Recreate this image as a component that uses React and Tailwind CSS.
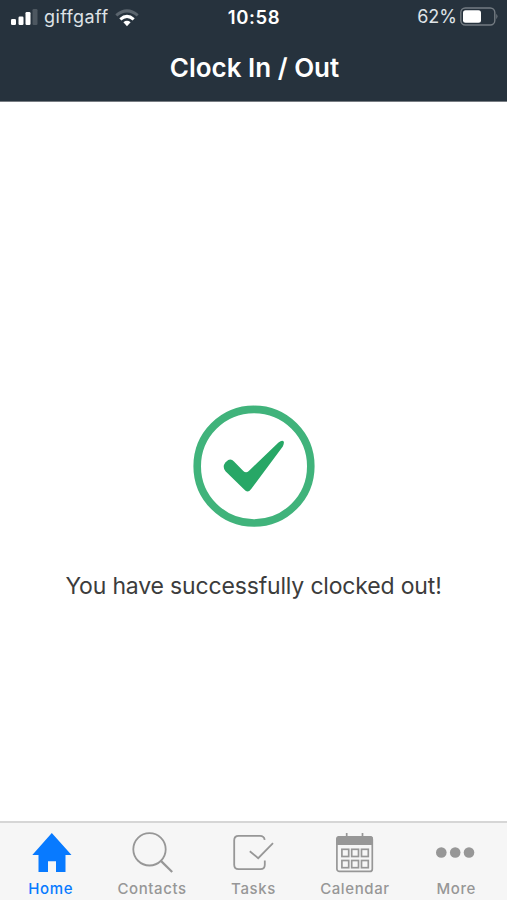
const tabs = [
  { name: 'Home', Icon: HomeIcon, active: true },
  { name: 'Contacts', Icon: SearchIcon },
  { name: 'Tasks', Icon: TasksIcon },
  { name: 'Calendar', Icon: CalendarIcon },
  { name: 'More', Icon: MoreIcon },
];

function HomeIcon() {
  return (
    <svg width="44" height="44" viewBox="0 0 44 44" fill="currentColor">
      <path d="M22.8 3 42.5 25H36.5V42H27V31.3H19V42H9.5V25H3.3Z" />
    </svg>
  );
}

function SearchIcon() {
  return (
    <svg width="44" height="44" viewBox="0 0 44 44" fill="none" stroke="currentColor" strokeWidth="1.8">
      <circle cx="19.5" cy="19.3" r="16.2" />
      <path d="M30.9 30.9 42.2 42" strokeWidth="2.2" />
    </svg>
  );
}

function TasksIcon() {
  return (
    <svg width="44" height="44" viewBox="0 0 44 44" fill="none" stroke="currentColor" strokeWidth="1.8">
      <path d="M33.7 9.8C33.2 7.2 31.7 5.9 29 5.9H7.6Q3.2 5.9 3.2 10.3V34.8Q3.2 39.2 7.6 39.2H29.4Q33.8 39.2 33.8 34.8V30.5" />
      <path d="M18.8 21.2 27.2 28.2 42 13.2" />
    </svg>
  );
}

function CalendarIcon() {
  return (
    <svg width="44" height="44" viewBox="0 0 44 44" fill="none" stroke="currentColor" strokeWidth="1.7">
      <rect x="3.9" y="7" width="35.4" height="34.4" rx="2.5" />
      <path d="M3.2 15V8.5Q3.2 6 5.7 6H37.5Q40 6 40 8.5V15Z" fill="currentColor" stroke="none" />
      <path d="M13.7 3V7M29.5 3V7" />
      {[19.3, 30.5].map((y) =>
        [8.9, 18.7, 28.5].map((x) => <rect key={`${x}-${y}`} x={x} y={y} width="6.8" height="7.2" />)
      )}
    </svg>
  );
}

function MoreIcon() {
  return (
    <svg width="44" height="44" viewBox="0 0 44 44" fill="currentColor">
      <circle cx="7.3" cy="22.5" r="5.3" />
      <circle cx="21.2" cy="22.5" r="5.3" />
      <circle cx="35" cy="22.5" r="5.3" />
    </svg>
  );
}

function StatusBar() {
  return (
    <div className="grid grid-cols-3 items-center h-[34px] pl-[10px] pr-[9px] text-[18px] leading-none">
      <div className="flex items-center text-[#dfe3e7]">
        <svg width="28" height="18" viewBox="0 0 28 18" fill="#fff">
          <rect x="1" y="11" width="5" height="6" rx="1.2" />
          <rect x="8.5" y="8.5" width="5" height="8.5" rx="1.2" />
          <rect x="15.5" y="4" width="5" height="13" rx="1.2" />
          <rect x="22.5" y="1" width="5" height="16" rx="1.2" fill="#4d5760" />
        </svg>
        <span className="ml-[6px] tracking-[0.4px]">giffgaff</span>
        <svg className="ml-[7px] mt-px" width="24" height="18" viewBox="0 0 24 18" fill="none" strokeWidth="3">
          <path d="M1.3 6.4Q12-2.6 22.7 6.4" stroke="#5b656e" />
          <path d="M5.3 10.4Q12 4.4 18.7 10.4" stroke="#fff" />
          <path d="M8.4 13.2Q12 10.4 15.6 13.2L12 17.2Z" fill="#fff" />
        </svg>
      </div>
      <span className="text-center text-[18.5px] font-semibold tracking-[0.6px]">10:58</span>
      <div className="flex items-center justify-end text-[#dfe3e7]">
        <span>62%</span>
        <svg className="ml-[3px]" width="38" height="20" viewBox="0 0 38 20">
          <rect x="0.8" y="1" width="34" height="17" rx="4.5" fill="none" stroke="#737b82" strokeWidth="1.4" />
          <rect x="3" y="3.2" width="18" height="12.6" rx="2.5" fill="#fff" />
          <path d="M36.3 6.8Q38.6 9.5 36.3 12.2Z" fill="#737b82" />
        </svg>
      </div>
    </div>
  );
}

export default function App() {
  return (
    <div className="flex flex-col h-screen overflow-hidden bg-white font-['Inter',sans-serif]">
      <header className="h-[102px] shrink-0 bg-[#26323d] border-b border-[#777c82] text-white">
        <StatusBar />
        <h1 className="h-[66px] pl-[2px] leading-[67px] text-center text-[26px] font-semibold">Clock In / Out</h1>
      </header>

      <main className="flex-1 flex flex-col items-center pt-[303px]">
        <svg width="122" height="122" viewBox="0 0 122 122">
          <circle cx="61" cy="61.2" r="56.8" fill="none" stroke="#40b37b" strokeWidth="7.6" />
          <path
            d="M32.3 57.4 35.2 55Q38.4 53.6 41 56.4L50.3 66Q53 68.7 55.8 66L85.5 37.6Q89 34.6 90.7 36.4Q91.4 38 89.8 41.5L58.4 83.8Q55 88.8 51.2 84.6L32.5 66.2Q29 61.8 32.3 57.4Z"
            fill="#27a766"
          />
        </svg>
        <p className="mt-[41px] text-[23px] leading-[36px] tracking-[-0.17px] text-[#3c3c3c]">
          You have successfully clocked out!
        </p>
      </main>

      {/* Bottom tab bar */}
      <nav className="grid grid-cols-5 h-[79px] shrink-0 bg-[#f6f6f6] border-t-2 border-[#d6d6d6]">
        {tabs.map(({ name, Icon, active }) => (
          <div
            key={name}
            className={`flex flex-col items-center pt-[7px] ${active ? 'text-[#087aff]' : 'text-[#979797]'}`}
          >
            <Icon />
            <span className="mt-[6px] text-[15px] leading-[18px] font-medium tracking-[0.6px]">{name}</span>
          </div>
        ))}
      </nav>
    </div>
  );
}
